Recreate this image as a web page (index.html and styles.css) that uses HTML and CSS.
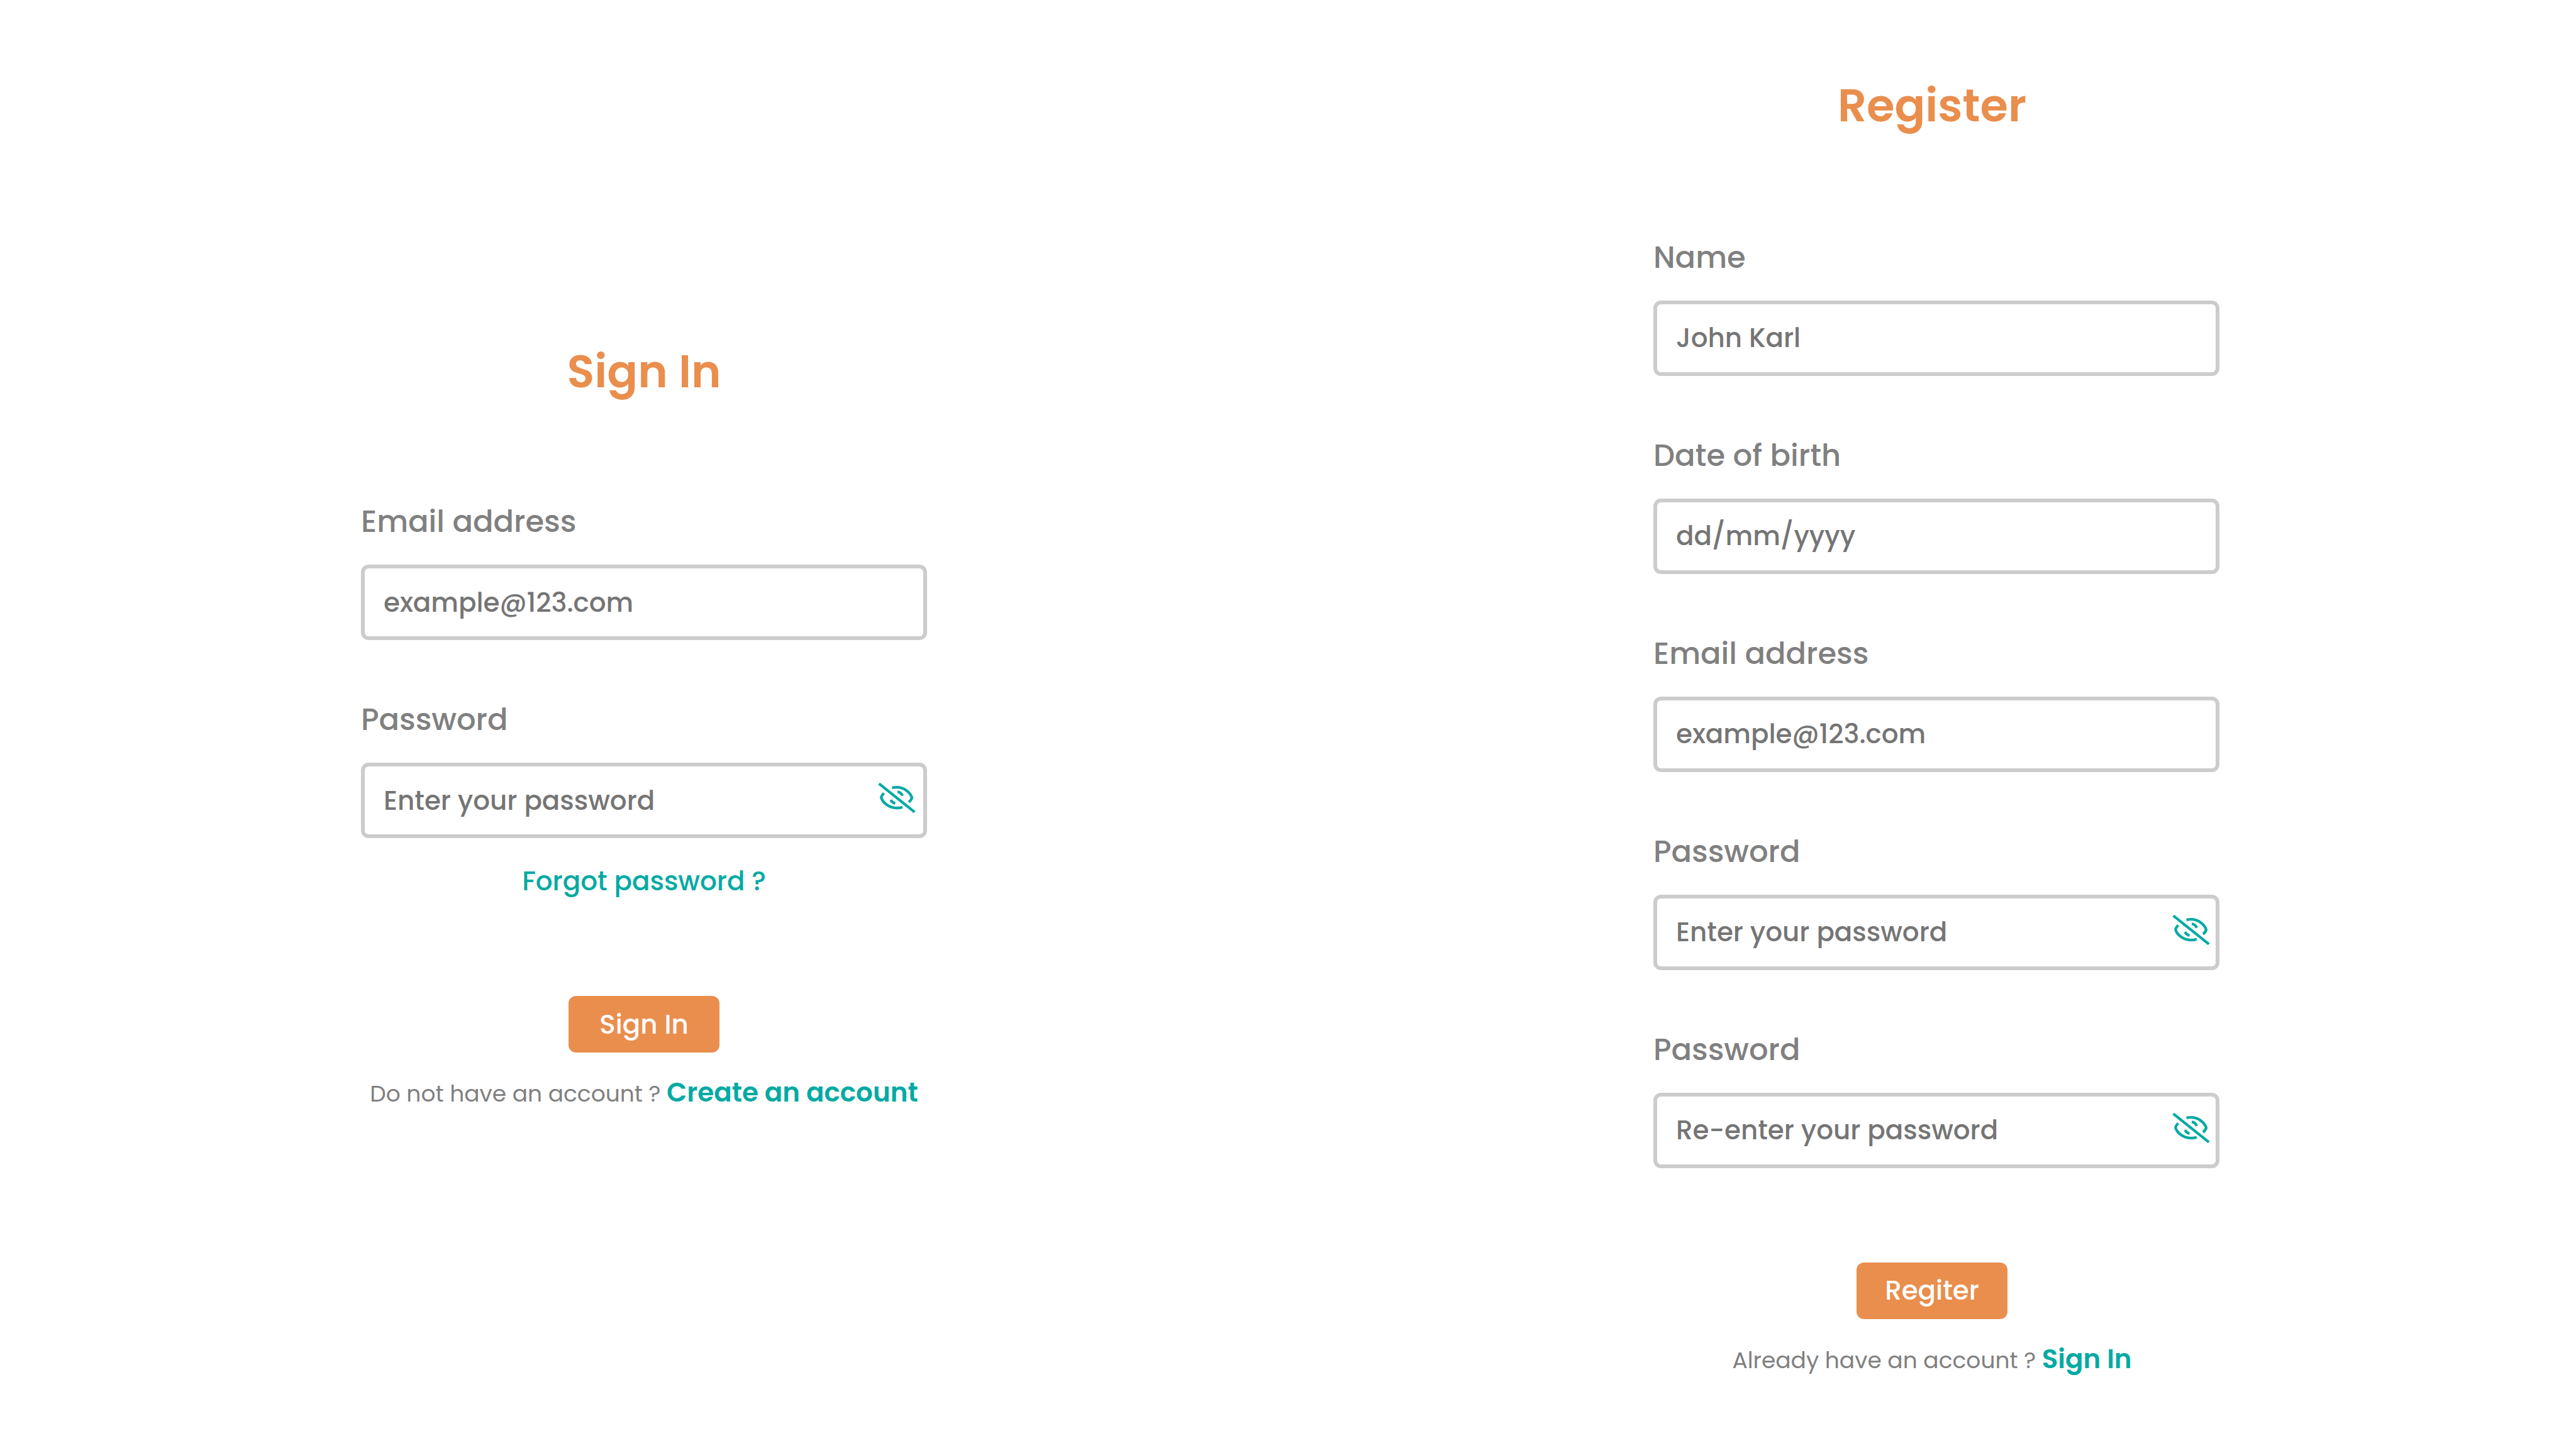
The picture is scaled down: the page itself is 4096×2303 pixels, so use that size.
FILE: index.html
```html
<!DOCTYPE html>
<html lang="en">
<head>
<meta charset="utf-8">
<meta name="viewport" content="width=device-width, initial-scale=1">
<title>Sign In / Register</title>
<link rel="stylesheet" href="styles.css">
</head>
<body>
<svg width="0" height="0" class="sprite" aria-hidden="true">
  <symbol id="eye-off" viewBox="0 0 83 67">
    <path d="M2 2L81 65M31 11Q36 10 41 10C59 10 72 23 75 33C74 37 72 40 68 43M13 23C9 27 7 30 7 33C10 44 24 56 41 56Q48 56 54 54M43 20Q51 21 54 29M28 38Q31 44 38 46"/>
  </symbol>
</svg>
<main class="page">
  <form class="card card-login">
    <h1 class="title">Sign In</h1>
    <div class="fields">
      <div class="field">
        <label class="label" for="login-email">Email address</label>
        <input class="input" id="login-email" type="email" placeholder="example@123.com">
      </div>
      <div class="field">
        <label class="label" for="login-password">Password</label>
        <div class="secret">
          <input class="input" id="login-password" type="password" placeholder="Enter your password">
          <button class="reveal" type="button" aria-label="Show password"><svg class="eye"><use href="#eye-off"/></svg></button>
        </div>
      </div>
    </div>
    <a class="forgot" href="#">Forgot password ?</a>
    <button class="submit" type="submit">Sign In</button>
    <p class="switch">Do not have an account ? <a class="switch-link" href="#register">Create an account</a></p>
  </form>

  <form class="card card-register" id="register">
    <h1 class="title">Register</h1>
    <div class="fields">
      <div class="field">
        <label class="label" for="name">Name</label>
        <input class="input" id="name" type="text" placeholder="John Karl">
      </div>
      <div class="field">
        <label class="label" for="birth">Date of birth</label>
        <input class="input" id="birth" type="text" placeholder="dd/mm/yyyy">
      </div>
      <div class="field">
        <label class="label" for="email">Email address</label>
        <input class="input" id="email" type="email" placeholder="example@123.com">
      </div>
      <div class="field">
        <label class="label" for="password">Password</label>
        <div class="secret">
          <input class="input" id="password" type="password" placeholder="Enter your password">
          <button class="reveal" type="button" aria-label="Show password"><svg class="eye"><use href="#eye-off"/></svg></button>
        </div>
      </div>
      <div class="field">
        <label class="label" for="password-again">Password</label>
        <div class="secret">
          <input class="input" id="password-again" type="password" placeholder="Re-enter your password">
          <button class="reveal" type="button" aria-label="Show password"><svg class="eye"><use href="#eye-off"/></svg></button>
        </div>
      </div>
    </div>
    <button class="submit" type="submit">Regiter</button>
    <p class="switch">Already have an account ? <a class="switch-link" href="#">Sign In</a></p>
  </form>
</main>
</body>
</html>
```
FILE: styles.css
```css
* {
  box-sizing: border-box;
}

body {
  margin: 0;
  background: #fff;
  color: #808080;
  font-family: Poppins, Inter, "Liberation Sans", sans-serif;
}

.sprite {
  position: absolute;
}

.page {
  display: grid;
  grid-template-columns: 1fr 1fr;
  align-items: center;
  min-height: 100vh;
  padding-top: 4px;
}

.card {
  display: flex;
  flex-direction: column;
  align-items: center;
}

.title {
  margin: 0 0 150px;
  color: #e98e4d;
  font-size: 72px;
  font-weight: 600;
  line-height: 112px;
}

.card-login .title {
  margin-bottom: 147px;
}

.fields {
  display: flex;
  flex-direction: column;
  gap: 91px;
  width: 100%;
  max-width: 900px;
}

.card-register .fields {
  margin-left: 14px;
}

.field {
  display: flex;
  flex-direction: column;
  gap: 32px;
}

.label {
  font-size: 48px;
  font-weight: 500;
  line-height: 72px;
}

.input {
  width: 100%;
  height: 120px;
  padding: 0 30px;
  border: 6px solid #ccc;
  border-radius: 12px;
  background: #fff;
  color: #757575;
  font: 500 42px Poppins, Inter, "Liberation Sans", sans-serif;
}

.input::placeholder {
  color: #757575;
}

.secret {
  position: relative;
}

.reveal {
  position: absolute;
  top: 32px;
  right: 18px;
  padding: 0;
  border: 0;
  background: none;
}

.card-register .reveal {
  right: 15px;
}

.eye {
  display: block;
  width: 60px;
  height: 48px;
  fill: none;
  stroke: #04aaa3;
  stroke-width: 6;
}

.forgot {
  margin-top: 37px;
  color: #04aaa3;
  font-size: 42px;
  font-weight: 500;
  line-height: 64px;
  text-decoration: none;
}

.submit {
  width: 240px;
  height: 90px;
  margin-top: 150px;
  padding: 0;
  border: 0;
  border-radius: 12px;
  background: #e98e4d;
  color: #fff;
  font: 500 42px Poppins, Inter, "Liberation Sans", sans-serif;
}

.switch {
  margin: 32px 0 0;
  font-size: 36px;
  line-height: 64px;
}

.switch-link {
  color: #04aaa3;
  font-size: 42px;
  font-weight: 600;
  text-decoration: none;
}
```
